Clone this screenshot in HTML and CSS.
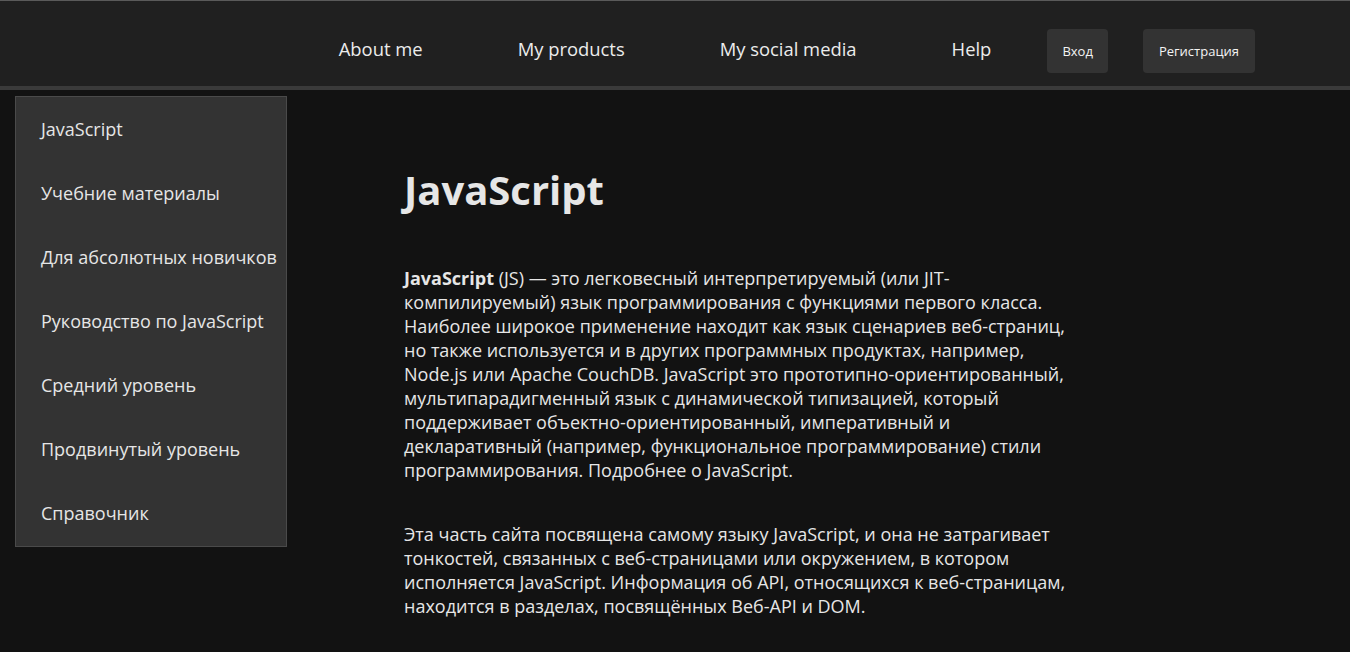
FILE: index.html
```html
<!DOCTYPE html>
<html lang="ru">
<head>
<meta charset="utf-8">
<title>JavaScript</title>
<link rel="stylesheet" href="styles.css">
</head>
<body>
<header class="header">
  <nav class="nav">
    <a class="nav-link" href="#">About me</a>
    <a class="nav-link" href="#">My products</a>
    <a class="nav-link" href="#">My social media</a>
    <a class="nav-link" href="#">Help</a>
  </nav>
  <div class="auth">
    <button class="btn btn-login">Вход</button>
    <button class="btn btn-reg">Регистрация</button>
  </div>
</header>
<div class="layout">
  <aside class="sidebar">
    <a class="side-link" href="#">JavaScript</a>
    <a class="side-link" href="#">Учебние материалы</a>
    <a class="side-link" href="#">Для абсолютных новичков</a>
    <a class="side-link" href="#">Руководство по JavaScript</a>
    <a class="side-link" href="#">Средний уровень</a>
    <a class="side-link" href="#">Продвинутый уровень</a>
    <a class="side-link" href="#">Справочник</a>
  </aside>
  <main class="content">
    <h1 class="title">JavaScript</h1>
    <p class="text"><strong>JavaScript</strong> (JS) — это легковесный интерпретируемый (или JIT-компилируемый) язык программирования с функциями первого класса. Наиболее широкое применение находит как язык сценариев веб-страниц, но также используется и в других программных продуктах, например, Node.js или Apache CouchDB. JavaScript это прототипно-ориентированный, мультипарадигменный язык с динамической типизацией, который поддерживает объектно-ориентированный, императивный и декларативный (например, функциональное программирование) стили программирования. Подробнее о JavaScript.</p>
    <p class="text">Эта часть сайта посвящена самому языку JavaScript, и она не затрагивает тонкостей, связанных с веб-страницами или окружением, в котором исполняется JavaScript. Информация об API, относящихся к веб-страницам, находится в разделах, посвящённых Веб-API и DOM.</p>
  </main>
</div>
</body>
</html>
```
FILE: styles.css
```css
* { box-sizing: border-box; }
html, body {
  margin: 0;
  padding: 0;
  background: #121212;
  color: #e6e6e6;
  font-family: "Open Sans", "Noto Sans", sans-serif;
  overflow: hidden;
}
.header {
  display: flex;
  align-items: center;
  justify-content: flex-end;
  height: 90px;
  padding-top: 14px;
  padding-right: 95px;
  background: #202020;
  border-top: 1px solid #5a5a5a;
  border-bottom: 4px solid #3a3a3a;
}
.nav {
  display: flex;
  gap: 95px;
  align-items: center;
}
.nav-link {
  color: #ececec;
  text-decoration: none;
  font-size: 18.4px;
  font-weight: 500;
  padding-bottom: 4px;
}
.auth {
  display: flex;
  gap: 35px;
  margin-left: 56px;
}
.btn {
  height: 44px;
  border: none;
  border-radius: 4px;
  background: #333333;
  color: #f4f4f4;
  font-family: "Open Sans", "Noto Sans", sans-serif;
  font-size: 13px;
  font-weight: 500;
  padding: 0 15px;
}
.btn-reg { padding: 0 16px; }
.layout {
  display: flex;
  align-items: flex-start;
  padding-top: 6px;
}
.sidebar {
  display: flex;
  flex-direction: column;
  margin-left: 15px;
  width: 272px;
  padding-bottom: 1px;
  background: #333333;
  border: 1px solid #4a4a4a;
}
.side-link {
  display: block;
  padding: 0 0 0 25px;
  height: 64px;
  line-height: 64px;
  color: #e6e6e6;
  text-decoration: none;
  font-size: 18px;
  white-space: nowrap;
}
.content {
  margin-left: 117px;
  width: 670px;
}
.title {
  margin: 69px 0 51px;
  font-size: 40px;
  font-weight: 700;
  line-height: 50px;
  color: #e6e6e6;
}
.text {
  margin: 0 0 40px;
  font-size: 18px;
  line-height: 24px;
}
.text strong { font-weight: 700; }
```
